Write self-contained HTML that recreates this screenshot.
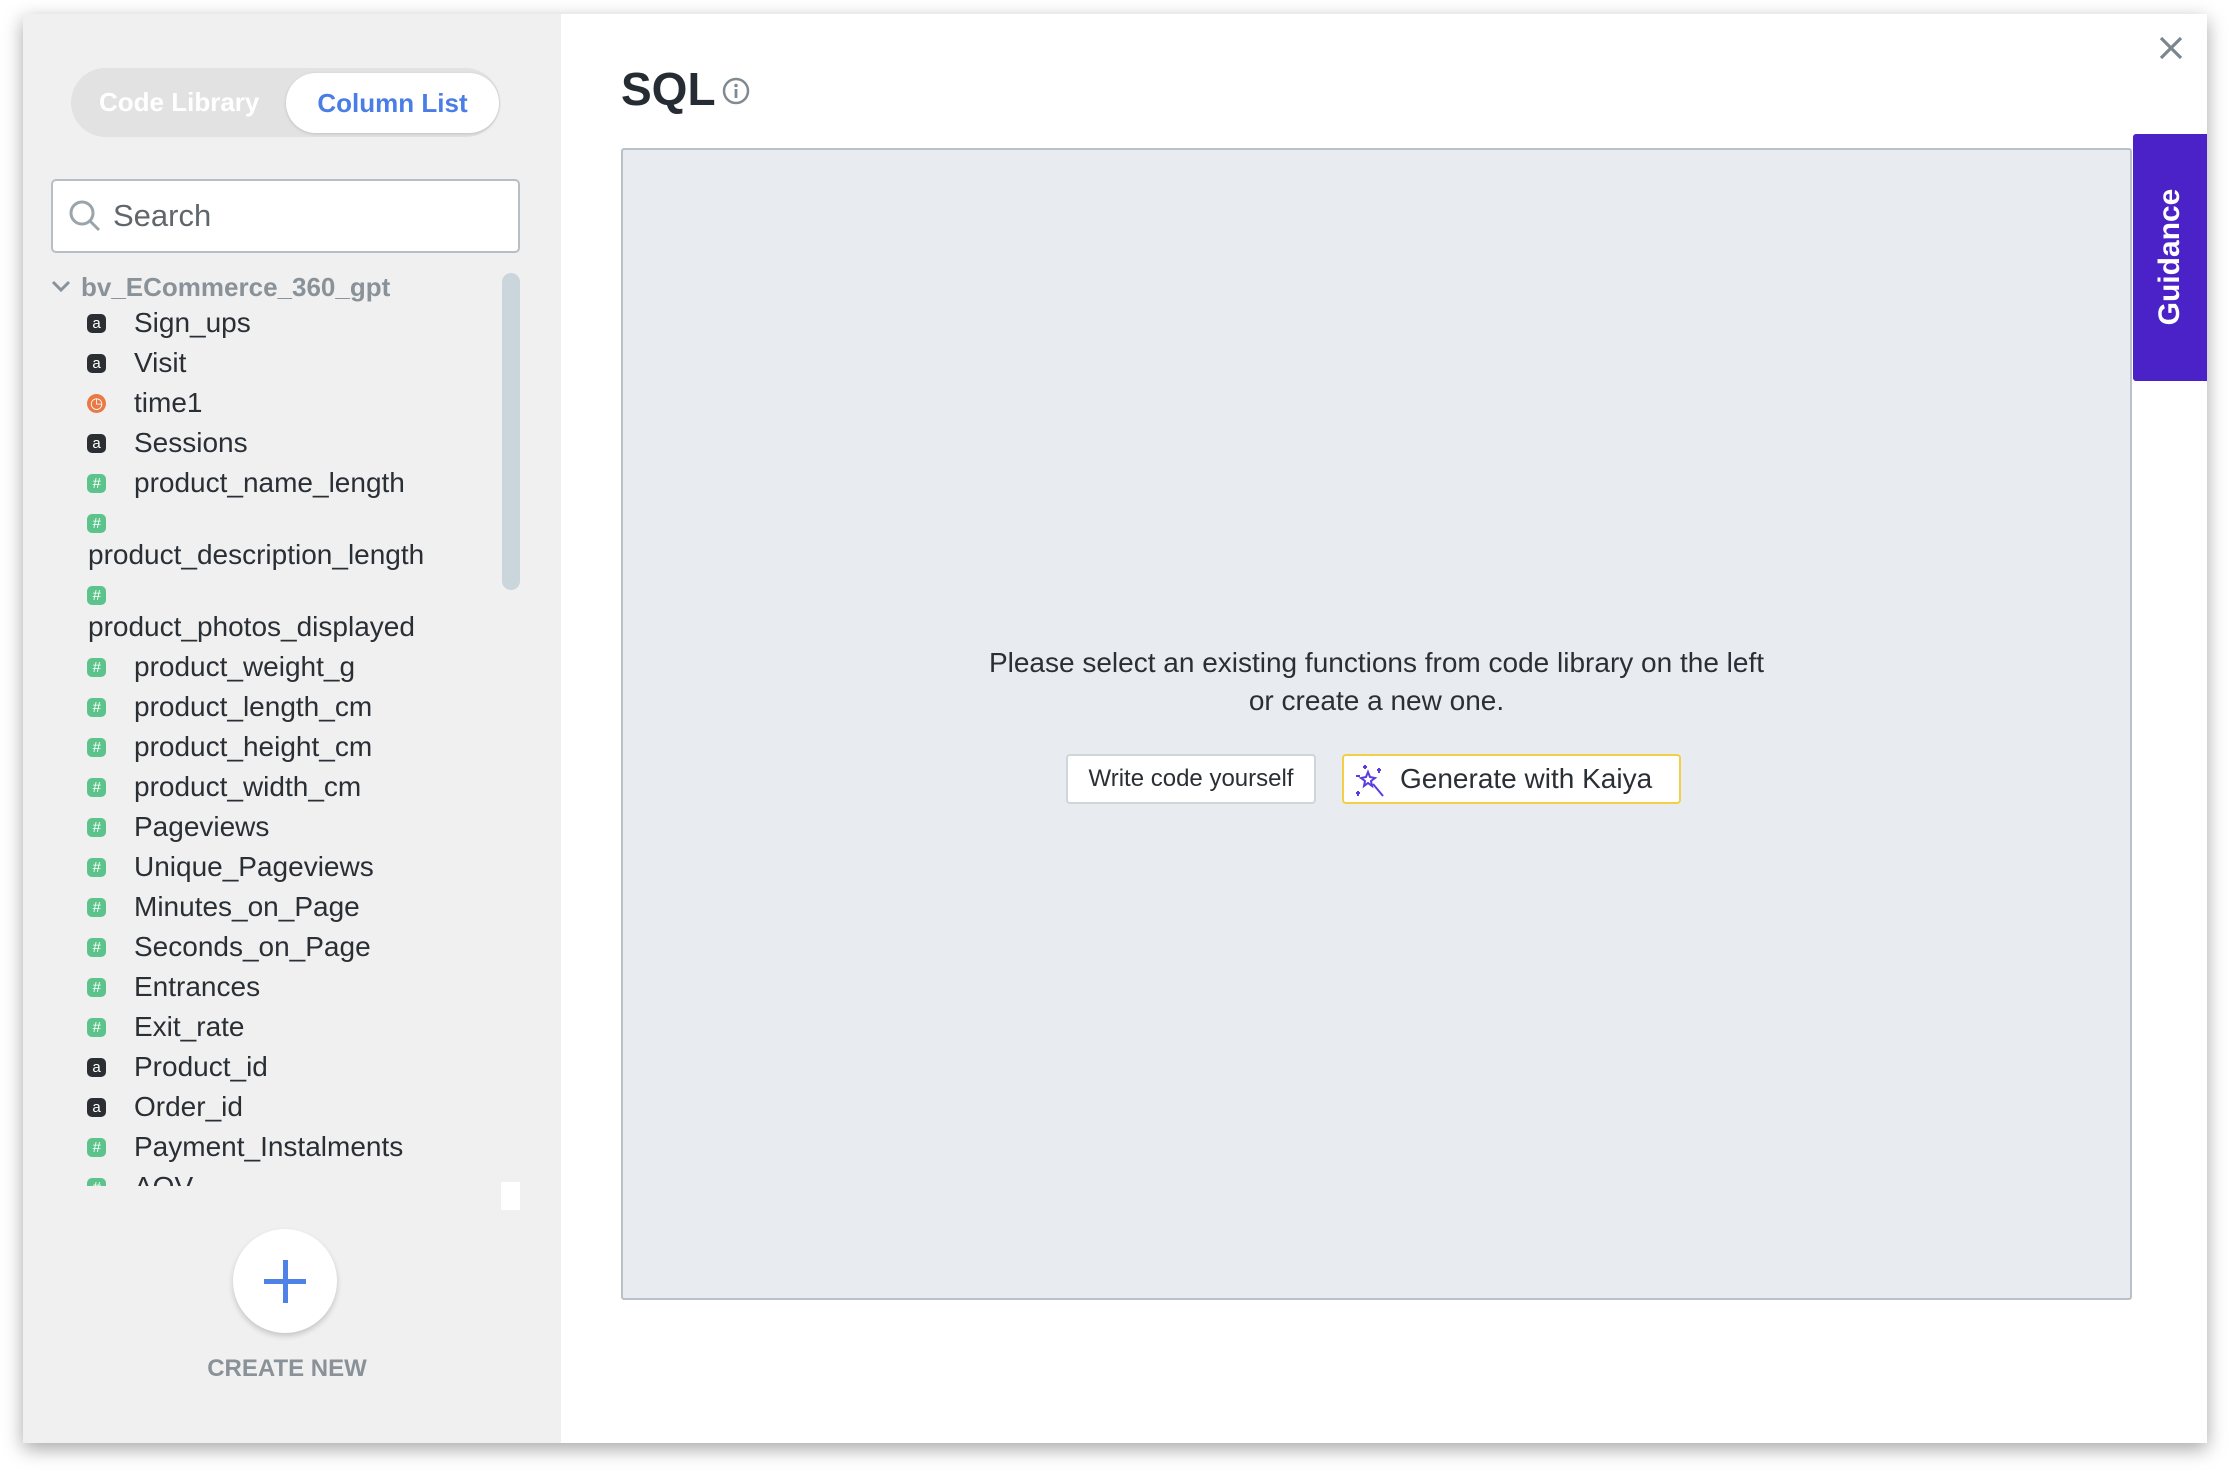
<!DOCTYPE html>
<html><head><meta charset="utf-8"><style>
*{margin:0;padding:0;box-sizing:border-box}
body{width:2230px;height:1476px;background:#fff;position:relative;overflow:hidden;font-family:"Liberation Sans",sans-serif;color:#2a2f35}
.modal{position:absolute;left:23px;top:14px;width:2184px;height:1429px;background:#fff;box-shadow:0 6px 18px rgba(0,0,0,.35)}
.side{position:absolute;left:0;top:0;width:538px;height:1429px;background:#f0f0f0}
.pill{position:absolute;left:48px;top:54px;width:429px;height:69px;border-radius:35px;background:#e2e2e2}
.pill .a{position:absolute;left:28px;top:0;line-height:69px;font-size:26px;font-weight:bold;color:#fff}
.pill .b{position:absolute;left:215px;top:5px;width:213px;height:60px;border-radius:30px;background:#fff;box-shadow:0 1px 3px rgba(0,0,0,.15);text-align:center;line-height:60px;font-size:26px;font-weight:bold;color:#4a7ee6}
.search{position:absolute;left:28px;top:165px;width:469px;height:74px;border:2px solid #b7bfc5;border-radius:5px;background:#fff}
.search span{position:absolute;left:60px;top:0;line-height:70px;font-size:31px;color:#5f666c}
.item{position:absolute;font-size:28px;white-space:nowrap;line-height:32px}
.ic{position:absolute;width:19px;height:19px;border-radius:5px;font-size:15px;line-height:19px;text-align:center;color:#fff}
.ia{background:#2b2f33}.in{background:#5cc48a;font-style:italic}.it{background:#e97a45;border-radius:50%}
.scroll{position:absolute;left:479px;top:259px;width:18px;height:317px;border-radius:9px;background:#cbd5dc}
</style></head><body>
<div class="modal">
<div class="side">
 <div class="pill"><div class="a">Code Library</div><div class="b">Column List</div></div>
 <div class="search"><svg style="position:absolute;left:14px;top:17px" width="36" height="36" viewBox="0 0 36 36"><circle cx="15" cy="15" r="11" fill="none" stroke="#9aa4ab" stroke-width="3"/><path d="M23 23l9 9" stroke="#9aa4ab" stroke-width="3"/></svg><span>Search</span></div>
 <svg style="position:absolute;left:28px;top:265px" width="20" height="14" viewBox="0 0 20 14"><path d="M2 3l8 8 8-8" fill="none" stroke="#8a9299" stroke-width="3"/></svg>
 <div class="item" style="left:58px;top:257px;font-weight:bold;color:#8a9299;font-size:26px">bv_ECommerce_360_gpt</div>
 <div class="scroll"></div>
 <div style="position:absolute;left:0;top:290px;width:478px;height:882px;overflow:hidden">
  <div style="position:relative;top:-290px">
  <div class="ic ia" style="left:64px;top:300px">a</div><div class="item" style="left:111px;top:293px">Sign_ups</div>
  <div class="ic ia" style="left:64px;top:340px">a</div><div class="item" style="left:111px;top:333px">Visit</div>
  <div class="ic it" style="left:64px;top:380px">◷</div><div class="item" style="left:111px;top:373px">time1</div>
  <div class="ic ia" style="left:64px;top:420px">a</div><div class="item" style="left:111px;top:413px">Sessions</div>
  <div class="ic in" style="left:64px;top:460px">#</div><div class="item" style="left:111px;top:453px">product_name_length</div>
  <div class="ic in" style="left:64px;top:500px">#</div><div class="item" style="left:65px;top:525px">product_description_length</div>
  <div class="ic in" style="left:64px;top:572px">#</div><div class="item" style="left:65px;top:597px">product_photos_displayed</div>
  <div class="ic in" style="left:64px;top:644px">#</div><div class="item" style="left:111px;top:637px">product_weight_g</div>
  <div class="ic in" style="left:64px;top:684px">#</div><div class="item" style="left:111px;top:677px">product_length_cm</div>
  <div class="ic in" style="left:64px;top:724px">#</div><div class="item" style="left:111px;top:717px">product_height_cm</div>
  <div class="ic in" style="left:64px;top:764px">#</div><div class="item" style="left:111px;top:757px">product_width_cm</div>
  <div class="ic in" style="left:64px;top:804px">#</div><div class="item" style="left:111px;top:797px">Pageviews</div>
  <div class="ic in" style="left:64px;top:844px">#</div><div class="item" style="left:111px;top:837px">Unique_Pageviews</div>
  <div class="ic in" style="left:64px;top:884px">#</div><div class="item" style="left:111px;top:877px">Minutes_on_Page</div>
  <div class="ic in" style="left:64px;top:924px">#</div><div class="item" style="left:111px;top:917px">Seconds_on_Page</div>
  <div class="ic in" style="left:64px;top:964px">#</div><div class="item" style="left:111px;top:957px">Entrances</div>
  <div class="ic in" style="left:64px;top:1004px">#</div><div class="item" style="left:111px;top:997px">Exit_rate</div>
  <div class="ic ia" style="left:64px;top:1044px">a</div><div class="item" style="left:111px;top:1037px">Product_id</div>
  <div class="ic ia" style="left:64px;top:1084px">a</div><div class="item" style="left:111px;top:1077px">Order_id</div>
  <div class="ic in" style="left:64px;top:1124px">#</div><div class="item" style="left:111px;top:1117px">Payment_Instalments</div>
  <div class="ic in" style="left:64px;top:1164px">#</div><div class="item" style="left:111px;top:1157px">AOV</div>
  </div>
 </div>
 <div style="position:absolute;left:478px;top:1168px;width:19px;height:28px;background:#fff"></div>
 <div style="position:absolute;left:210px;top:1215px;width:104px;height:104px;border-radius:50%;background:#fff;box-shadow:0 3px 6px rgba(0,0,0,.18)"><div style="position:absolute;left:31px;top:50px;width:42px;height:5px;background:#4f82e6"></div><div style="position:absolute;left:50px;top:31px;width:5px;height:43px;background:#4f82e6"></div></div>
 <div style="position:absolute;left:0;width:528px;top:1341px;text-align:center;font-size:24px;font-weight:bold;color:#8a9299">CREATE NEW</div>
</div>
<div style="position:absolute;left:598px;top:48px;font-size:46px;font-weight:bold;color:#262c33">SQL</div>
<svg style="position:absolute;left:698px;top:62px" width="30" height="30" viewBox="0 0 30 30"><circle cx="15" cy="15" r="12" fill="none" stroke="#7f8a92" stroke-width="2.5"/><circle cx="15" cy="9.5" r="1.8" fill="#7f8a92"/><path d="M15 13v9" stroke="#7f8a92" stroke-width="2.8"/></svg>
<svg style="position:absolute;left:2135px;top:21px" width="26" height="26" viewBox="0 0 26 26"><path d="M3 3l20 20M23 3L3 23" stroke="#7b868e" stroke-width="3.2"/></svg>
<div style="position:absolute;left:598px;top:134px;width:1511px;height:1152px;background:#e8ecf0;border:2px solid #b8c1c7;border-radius:3px">
 <div style="position:absolute;left:0;width:100%;top:494px;text-align:center;font-size:28px;line-height:38px;color:#2a2f35">Please select an existing functions from code library on the left<br>or create a new one.</div>
 <div style="position:absolute;left:443px;top:604px;width:250px;height:50px;background:#fff;border:2px solid #cfd6db;border-radius:4px;text-align:center;line-height:46px;font-size:24px">Write code yourself</div>
 <div style="position:absolute;left:719px;top:604px;width:339px;height:50px;background:#fff;border:2px solid #f4cf45;border-radius:4px;line-height:46px;font-size:28px;padding-left:56px">Generate with Kaiya
  <svg style="position:absolute;left:10px;top:8px" width="34" height="34" viewBox="0 0 34 34" fill="none" stroke="#5a3ce0" stroke-width="2"><path d="M14 8l2 5 5 1-4 3 1 5-4-3-4 3 1-5-4-3 5-1z"/><path d="M19 20l10 12"/><path d="M11 1v4M9 3h4M25 4v5M23 6h4M2 12h4M4 27v5M2 29h4"/></svg></div>
</div>
<div style="position:absolute;left:2110px;top:120px;width:74px;height:247px;background:#4a22c8;border-radius:3px 0 0 3px"><div style="position:absolute;left:37px;top:123px;transform:translate(-50%,-50%) rotate(-90deg);color:#fff;font-weight:bold;font-size:30px;white-space:nowrap">Guidance</div></div>
</div>
</body></html>
